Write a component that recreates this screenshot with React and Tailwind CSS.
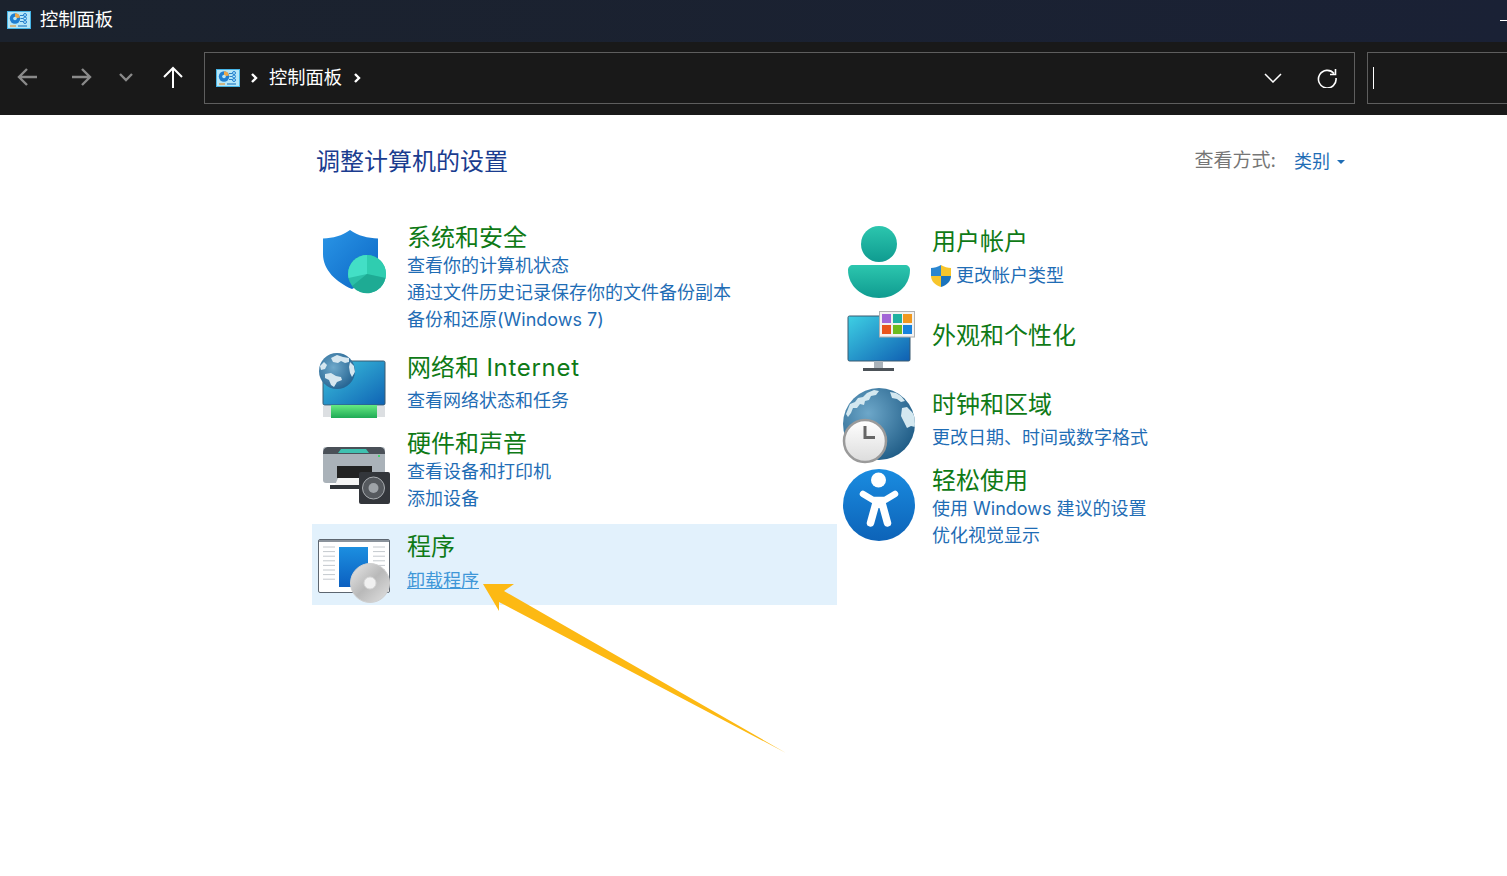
const FONT = "font-['Inter','Noto_Sans_CJK_SC','Noto_Sans',sans-serif]";

function PanelIcon({ className }) {
  return (
    <svg viewBox="0 0 24 18" className={className}>
      <rect x="0.5" y="0.5" width="23" height="17" fill="#b5e6f8" stroke="#46b4e6" />
      <circle cx="8" cy="7.500" r="5.200" fill="#1f7ed0" />
      <path d="M8 7.500V2.300A5.200 5.200 0 0 1 13 6.500z" fill="#eaa64a" />
      <circle cx="8" cy="7.500" r="1.800" fill="#b5e6f8" />
      <path d="M13 4.500H16M13.500 7.500H16M13 10.500H16" stroke="#2a7fc4" strokeWidth="1" />
      <circle cx="18" cy="4" r="1.500" fill="none" stroke="#1f7ed0" />
      <circle cx="18" cy="7.500" r="1.500" fill="none" stroke="#1f7ed0" />
      <circle cx="18" cy="11" r="1.500" fill="none" stroke="#1f7ed0" />
      <path d="M3 15H9" stroke="#e0963a" strokeWidth="1.200" />
      <path d="M11 15H20" stroke="#2a7fc4" strokeWidth="1.200" />
    </svg>
  );
}

function Arrow({ dir, color }) {
  const d = {
    left: "M3 12H21M11 4L3 12L11 20",
    right: "M3 12H21M13 4L21 12L13 20",
  }[dir];
  return (
    <svg viewBox="0 0 24 24" className="w-[24px] h-[24px]" fill="none" stroke={color} strokeWidth="2.400">
      <path d={d} />
    </svg>
  );
}

function Chevron({ className = "", color = "#fff", w = 2.4 }) {
  return (
    <svg viewBox="0 0 12 12" className={className} fill="none" stroke={color} strokeWidth={w}>
      <path d="M4 2L8 6L4 10" />
    </svg>
  );
}

function Shield() {
  return (
    <svg viewBox="312 222 95 80" className="w-[95px] h-[80px] shrink-0 overflow-visible">
      <defs>
        <linearGradient id="sh" x1="0" y1="0" x2="1" y2="1">
          <stop offset="0" stopColor="#2a95e6" />
          <stop offset="1" stopColor="#0b66c4" />
        </linearGradient>
      </defs>
      <path d="M350 230C358 236 368 238 378 238.500V258C378 272 366 283 352 289C336 282 323 270 323 254V238.500C333 238 342 236 350 230Z" fill="url(#sh)" />
      <circle cx="367" cy="274" r="19" fill="#2bc0a8" />
      <path d="M367 274V255A19 19 0 0 1 385.500 278Z" fill="#2fcdb0" />
      <path d="M367 274L348 274A19 19 0 0 1 367 255Z" fill="#43dfc6" />
      <path d="M367 274L348.500 278A19 19 0 0 1 348 274Z" fill="#43dfc6" />
      <path d="M367 274L385.500 278A19 19 0 0 1 352 286Z" fill="#1eab94" />
    </svg>
  );
}

function Network() {
  return (
    <svg viewBox="312 352 95 72" className="w-[95px] h-[72px] shrink-0 overflow-visible">
      <defs>
        <linearGradient id="mon" x1="0" y1="0" x2="1" y2="1">
          <stop offset="0" stopColor="#3dc4de" />
          <stop offset="1" stopColor="#0f63b4" />
        </linearGradient>
        <radialGradient id="gl" cx="0.4" cy="0.4" r="0.7">
          <stop offset="0" stopColor="#6fa9cb" />
          <stop offset="1" stopColor="#1e5d8c" />
        </radialGradient>
        <clipPath id="glc"><circle cx="337" cy="371" r="18" /></clipPath>
        <linearGradient id="gb" x1="0" y1="0" x2="0" y2="1">
          <stop offset="0" stopColor="#66ea82" />
          <stop offset="1" stopColor="#1faa55" />
        </linearGradient>
      </defs>
      <rect x="323" y="361" width="62" height="44" rx="1.500" fill="url(#mon)" stroke="#3a5a70" />
      <rect x="323" y="406" width="62" height="11" fill="#dcdfe2" />
      <rect x="331" y="405" width="46" height="13" fill="url(#gb)" />
      <circle cx="337" cy="371" r="18" fill="url(#gl)" />
      <g clipPath="url(#glc)">
        <path d="M325 374L331 373L336 376L341 377L342 380L337 382L334 387L331 385L329 380L325 378ZM331 358L337 355L343 357L349 358L349 362L345 363L341 361L338 363L333 362ZM350 362L354 366L355 372L352 377L350 373L349 367Z" fill="#d6e7f0" />
        <path d="M320 366L324 362L327 365L325 369L321 370Z" fill="#d6e7f0" />
      </g>
    </svg>
  );
}

function Printer() {
  return (
    <svg viewBox="312 428 95 84" className="w-[95px] h-[84px] shrink-0 overflow-visible">
      <rect x="323" y="447" width="62" height="36" rx="3" fill="#aab2b9" />
      <path d="M323 454C323 449 325 447 329 447H379C383 447 385 449 385 454Z" fill="#4a5058" />
      <path d="M338 453L341 449H366L369 453Z" fill="#3fc1b0" />
      <rect x="378" y="455" width="2" height="2" fill="#45d36b" />
      <rect x="337" y="466" width="35" height="12" fill="#222" />
      <path d="M338 478H362V485H335Z" fill="#f4f4f4" />
      <rect x="330" y="485" width="31" height="4" fill="#2f3338" />
      <rect x="359" y="472" width="31" height="32" rx="2" fill="#33363b" />
      <circle cx="373.500" cy="488" r="11" fill="#55595e" stroke="#a9adb1" strokeWidth="1" />
      <circle cx="373.500" cy="488" r="5" fill="#9ea3a8" />
    </svg>
  );
}

function Programs() {
  const lines = [0, 1, 2, 3, 4, 5, 6, 7];
  return (
    <svg viewBox="312 531 95 70" className="w-[95px] h-[70px] shrink-0 overflow-visible">
      <defs>
        <linearGradient id="pb" x1="0" y1="0" x2="0" y2="1">
          <stop offset="0" stopColor="#1c8fe0" />
          <stop offset="1" stopColor="#0b5fc0" />
        </linearGradient>
        <linearGradient id="cd" x1="0" y1="0" x2="1" y2="1">
          <stop offset="0" stopColor="#e8e8e8" />
          <stop offset="0.5" stopColor="#b9b9b9" />
          <stop offset="1" stopColor="#e2e2e2" />
        </linearGradient>
      </defs>
      <rect x="318.500" y="539.500" width="71" height="53" rx="1.500" fill="#fff" stroke="#5d6670" />
      <rect x="319" y="540" width="70" height="2" fill="#8b939c" />
      {lines.map((i) => (
        <path key={i} d={`M323 ${547 + i * 4.6}H335M373 ${547 + i * 4.6}H385`} stroke="#c4c9ce" strokeWidth="1" />
      ))}
      <rect x="339" y="547" width="29" height="40" fill="url(#pb)" />
      <circle cx="370" cy="583" r="19.500" fill="url(#cd)" stroke="#cfcfcf" />
      <circle cx="370" cy="583" r="6" fill="#f1f1f1" stroke="#d8d8d8" />
    </svg>
  );
}

function User() {
  return (
    <svg viewBox="837 226 95 80" className="w-[95px] h-[80px] shrink-0">
      <defs>
        <linearGradient id="ut" x1="0" y1="0" x2="0" y2="1">
          <stop offset="0" stopColor="#2cc6ae" />
          <stop offset="1" stopColor="#0f9b90" />
        </linearGradient>
      </defs>
      <circle cx="879" cy="244" r="18" fill="url(#ut)" />
      <path d="M853 265H905C908 265 910 267 910 270C910 286 896 298 879 298C862 298 848 286 848 270C848 267 850 265 853 265Z" fill="url(#ut)" />
    </svg>
  );
}

function UacShield() {
  return (
    <svg viewBox="0 0 22 22" className="w-[22px] h-[22px] shrink-0">
      <path d="M11 0C14 2 18 3 21 3V11H11Z" fill="#f7c52c" />
      <path d="M11 0C8 2 4 3 1 3V11H11Z" fill="#2a86d0" />
      <path d="M1 11C1 16 5 20 11 22V11Z" fill="#f7c52c" />
      <path d="M21 11C21 16 17 20 11 22V11Z" fill="#1c74bd" />
    </svg>
  );
}

function Appearance() {
  const tiles = [
    [882, 314, "#a266d6"], [893, 314, "#1fb0a0"], [903, 314, "#f0981f"],
    [882, 325, "#e8541c"], [893, 325, "#6cbb1e"], [903, 325, "#1682dc"],
  ];
  return (
    <svg viewBox="837 306 95 75" className="w-[95px] h-[75px] shrink-0">
      <defs>
        <linearGradient id="ap" x1="0" y1="0" x2="1" y2="1">
          <stop offset="0" stopColor="#3ed0e4" />
          <stop offset="1" stopColor="#0f5fb2" />
        </linearGradient>
      </defs>
      <rect x="848" y="316" width="62" height="45" rx="1.500" fill="url(#ap)" stroke="#3a5a70" />
      <rect x="874" y="361" width="9" height="7" fill="#aab2b9" />
      <rect x="863" y="368" width="31" height="3" fill="#4c5258" />
      <rect x="879.500" y="311.500" width="35" height="25.500" fill="#f2f2f2" stroke="#b0b0b0" />
      {tiles.map(([x, y, c]) => (
        <rect key={x + "-" + y} x={x} y={y} width="9" height="9" fill={c} />
      ))}
    </svg>
  );
}

function ClockGlobe() {
  return (
    <svg viewBox="837 381 95 84" className="w-[95px] h-[84px] shrink-0">
      <defs>
        <radialGradient id="cg" cx="0.35" cy="0.35" r="0.8">
          <stop offset="0" stopColor="#6da7c9" />
          <stop offset="1" stopColor="#17547f" />
        </radialGradient>
        <linearGradient id="cl" x1="0" y1="0" x2="0" y2="1">
          <stop offset="0" stopColor="#ffffff" />
          <stop offset="1" stopColor="#dcdcdc" />
        </linearGradient>
        <clipPath id="cgc"><circle cx="879" cy="424" r="36" /></clipPath>
      </defs>
      <circle cx="879" cy="424" r="36" fill="url(#cg)" />
      <g clipPath="url(#cgc)">
        <path d="M846 414L850 404L855 402L858 398L863 397L867 393L874 390L879 391L876 395L871 396L869 400L865 401L864 405L860 404L857 408L853 408L851 413L848 417Z" fill="#d4e8f0" />
        <path d="M890 392L896 393L901 396L905 401L901 402L897 399L892 398Z" fill="#d4e8f0" />
        <path d="M902 408L907 407L912 412L916 418L915 427L911 426L907 428L904 422L901 416Z" fill="#d4e8f0" />
      </g>
      <circle cx="865" cy="441" r="21" fill="url(#cl)" stroke="#9a9a9a" strokeWidth="2.500" />
      <path d="M865 426V437.500H875" fill="none" stroke="#666" strokeWidth="3" />
    </svg>
  );
}

function Access() {
  return (
    <svg viewBox="837 465 95 84" className="w-[95px] h-[84px] shrink-0">
      <defs>
        <linearGradient id="ac" x1="0" y1="0" x2="0" y2="1">
          <stop offset="0" stopColor="#1a8ce0" />
          <stop offset="1" stopColor="#0d63b8" />
        </linearGradient>
      </defs>
      <circle cx="879" cy="505" r="36" fill="url(#ac)" />
      <circle cx="878.500" cy="480" r="7.500" fill="#fff" />
      <path d="M863 494L873 500H885L895 494" fill="none" stroke="#fff" strokeWidth="6.500" strokeLinecap="round" strokeLinejoin="round" />
      <path d="M873 499H885V508H873Z" fill="#fff" />
      <path d="M876 503L870.500 523M882 503L887.500 523" fill="none" stroke="#fff" strokeWidth="7.500" strokeLinecap="round" />
    </svg>
  );
}

function Title({ children, className = "" }) {
  return <div className={`h-[30px] pt-px text-[24px] leading-[30px] text-[#0f7a16] ${className}`}>{children}</div>;
}

function Link({ children, className = "" }) {
  return <div className={`text-[18px] leading-[27px] text-[#1f6db5] ${className}`}>{children}</div>;
}

export default function App() {
  return (
    <div className={`relative h-[876px] w-full overflow-hidden bg-white ${FONT}`}>
      <div className="flex h-[42px] items-start justify-between bg-gradient-to-r from-[#1b222d] to-[#1a2135] pl-[7px]">
        <div className="flex items-center gap-[9px] pt-[6px]">
          <PanelIcon className="w-[24px] h-[18px]" />
          <span className="text-[18.25px] leading-[27px] text-white">控制面板</span>
        </div>
        <div className="mt-[20px] h-px w-[7px] bg-white" />
      </div>

      <div className="flex h-[73px] items-start bg-[#191919] pt-[10px]">
        <div className="flex h-[50px] w-[204px] shrink-0 items-center pl-[16px]">
          <Arrow dir="left" color="#8a8a8a" />
          <div className="ml-[29px]"><Arrow dir="right" color="#8a8a8a" /></div>
          <svg viewBox="0 0 14 10" className="ml-[26px] w-[14px] h-[10px]" fill="none" stroke="#8a8a8a" strokeWidth="2.400">
            <path d="M1 2L7 8L13 2" />
          </svg>
          <svg viewBox="0 0 24 24" className="ml-[28px] w-[24px] h-[24px]" fill="none" stroke="#fff" strokeWidth="2">
            <path d="M12 23V3M3 12L12 3L21 12" />
          </svg>
        </div>
        <div className="flex h-[52px] w-[1151px] shrink-0 items-center border border-[#5e5e5e] pb-[1px] pl-[11px] pr-[17px]">
          <PanelIcon className="w-[24px] h-[18px]" />
          <Chevron className="ml-[8px] w-[12px] h-[12px]" />
          <span className="ml-[9px] text-[18.25px] text-white">控制面板</span>
          <Chevron className="ml-[9px] w-[12px] h-[12px]" />
          <svg viewBox="0 0 18 10" className="ml-auto w-[18px] h-[10px]" fill="none" stroke="#fff" strokeWidth="1.500">
            <path d="M1 1L9 9L17 1" />
          </svg>
          <svg viewBox="0 0 20 20" className="ml-[35px] w-[20px] h-[20px]" fill="none" stroke="#fff" strokeWidth="1.600">
            <path d="M17 5.500A8.800 8.800 0 1 0 19 10M18.500 1V6.500H13" />
          </svg>
        </div>
        <div className="ml-[12px] flex h-[52px] flex-1 items-center border border-r-0 border-[#5e5e5e] pl-[5px]">
          <div className="h-[22px] w-px bg-white" />
        </div>
      </div>

      <div className="flex items-center justify-between pl-[316px] pr-[162px] pt-[29px]">
        <h1 className="text-[24px] leading-[36px] text-[#1a3c8f]">调整计算机的设置</h1>
        <div className="-mt-px flex items-center text-[19px]">
          <span className="text-[#767676]">查看方式:</span>
          <span className="ml-[18px] text-[18px] text-[#1f6db5]">类别</span>
          <span className="ml-[7px] h-0 w-0 border-x-[4px] border-t-[4px] border-x-transparent border-t-[#1f6db5]" />
        </div>
      </div>

      <div className="flex pl-[312px] pt-[42px]">
        <div className="w-[525px] shrink-0">
          <div className="flex h-[111px]">
            <Shield />
            <div>
              <Title>系统和安全</Title>
              <Link>查看你的计算机状态</Link>
              <Link>通过文件历史记录保存你的文件备份副本</Link>
              <Link>备份和还原(Windows 7)</Link>
            </div>
          </div>
          <div className="mt-[19px] flex h-[62px]">
            <Network />
            <div>
              <Title>网络和<span className="tracking-[0.7px]"> Internet</span></Title>
              <Link className="mt-[5px]">查看网络状态和任务</Link>
            </div>
          </div>
          <div className="mt-[14px] flex h-[84px]">
            <Printer />
            <div>
              <Title>硬件和声音</Title>
              <Link>查看设备和打印机</Link>
              <Link>添加设备</Link>
            </div>
          </div>
          <div className="mt-[12px] flex h-[81px] bg-[#e2f1fc] pt-[7px]">
            <Programs />
            <div>
              <Title>程序</Title>
              <Link className="mt-[6px] text-[#3f97d8] underline">卸载程序</Link>
            </div>
          </div>
        </div>

        <div className="w-[400px] pt-[4px]">
          <div className="flex h-[80px]">
            <User />
            <div>
              <Title>用户帐户</Title>
              <div className="mt-[6px] -ml-[2px] flex items-center">
                <UacShield />
                <Link className="ml-[4px]">更改帐户类型</Link>
              </div>
            </div>
          </div>
          <div className="flex h-[75px]">
            <Appearance />
            <Title className="mt-[14px]">外观和个性化</Title>
          </div>
          <div className="flex h-[84px]">
            <ClockGlobe />
            <div className="pt-[8px]">
              <Title>时钟和区域</Title>
              <Link className="mt-[5px]">更改日期、时间或数字格式</Link>
            </div>
          </div>
          <div className="flex h-[84px]">
            <Access />
            <div>
              <Title>轻松使用</Title>
              <Link>使用 Windows 建议的设置</Link>
              <Link>优化视觉显示</Link>
            </div>
          </div>
        </div>
      </div>

      <svg viewBox="0 0 1507 876" className="pointer-events-none absolute left-0 top-0 h-[876px] w-[1507px]">
        <polygon points="483,584 514,584 504,591 786,753 499,602 499,611" fill="#fdb913" />
      </svg>
    </div>
  );
}
